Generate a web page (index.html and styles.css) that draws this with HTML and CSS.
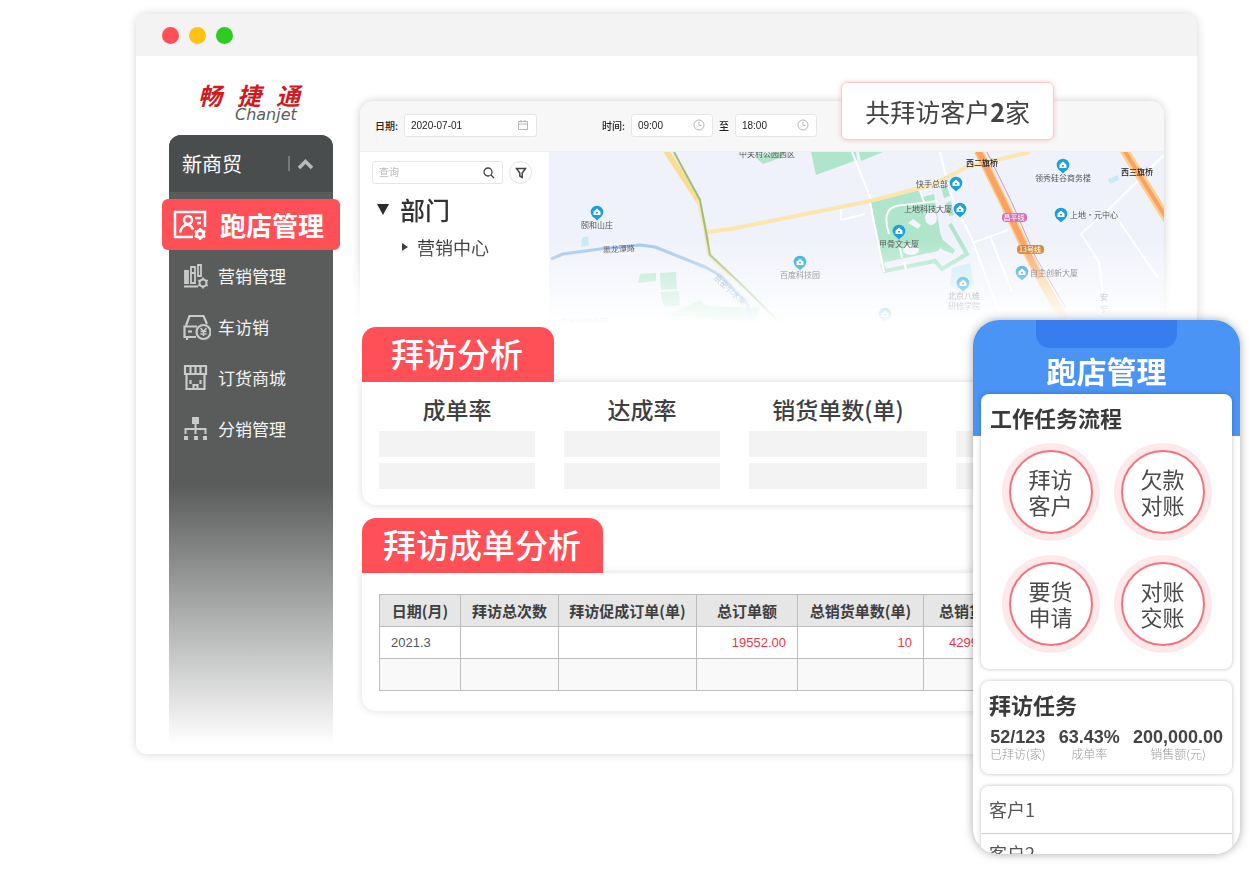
FILE: index.html
```html
<!DOCTYPE html>
<html lang="zh-CN">
<head>
<meta charset="utf-8">
<meta name="viewport" content="width=device-width, initial-scale=1">
<title>跑店管理</title>
<link rel="stylesheet" href="styles.css">
</head>
<body>
<div class="stage">
  <div class="window">
    <header class="titlebar">
      <span class="dot dot-red"></span><span class="dot dot-yellow"></span><span class="dot dot-green"></span>
    </header>
    <div class="window-body">
      <aside class="side">
        <div class="logo">
          <div class="logo-cn"><span>畅</span><span>捷</span><span>通</span></div>
          <div class="logo-en">Chanjet</div>
        </div>
        <nav class="menu">
          <button class="menu-head" type="button">
            <span>新商贸</span>
            <svg class="menu-caret" viewBox="0 0 28 18" width="28" height="18" fill="none"><path d="M2 1v15" stroke="#777a7a" stroke-width="2"/><path d="M12 13l6.500-6.500L25 13" stroke="#b9baba" stroke-width="3.500"/></svg>
          </button>
          <a class="menu-item active" href="#">
            <svg viewBox="0 0 34 30" width="34" height="30" fill="none" stroke="#fff" stroke-width="2.500">
              <path d="M20 27H2V2h30v15"/><circle cx="15" cy="10" r="4"/><path d="M7 22.500c1-5 3-7 7-8 3 .5 5 2.500 6 5"/><path d="M22 8h6M24 13h4"/>
              <circle cx="27" cy="24" r="3.500" stroke-width="3"/><path d="M27 18v2M27 28v2M21.800 21l2 1.200M30.200 25.800l2 1.200M21.800 27l2-1.200M30.200 22.200l2-1.200"/>
            </svg>
            <span>跑店管理</span>
          </a>
          <a class="menu-item" href="#">
            <svg viewBox="0 0 28 28" width="28" height="28" fill="none" stroke="#c9caca" stroke-width="1.800">
              <path d="M2 9h3v12H2zM8 5h4v16H8zM15 3h3v11h-3z"/><path d="M1 24.500h14M3.500 9v12M8 11h4"/>
              <circle cx="20" cy="21" r="3.500" stroke-width="2"/><path d="M20 15.500v2M20 24.500v2M15.200 18.200l1.700 1M23.100 22.800l1.700 1M15.200 23.800l1.700-1M23.100 19.200l1.700-1"/>
            </svg>
            <span>营销管理</span>
          </a>
          <a class="menu-item" href="#">
            <svg viewBox="0 0 28 28" width="28" height="28" fill="none" stroke="#c9caca" stroke-width="2.200">
              <path d="M3 12.500L6.500 3h14L24 11M13 24H1.500V13.500H14M4 24v3M2 13.500h10"/><path d="M5 18.500h4"/>
              <circle cx="20.500" cy="19" r="7"/><path d="M17.500 15l3 3.500 3-3.500M20.500 18.500V23M17.500 18.500h6M17.500 21h6" stroke-width="1.500"/>
            </svg>
            <span>车访销</span>
          </a>
          <a class="menu-item" href="#">
            <svg viewBox="0 0 28 28" width="28" height="28" fill="none" stroke="#c9caca" stroke-width="2.200">
              <path d="M2 2h21v8H2zM7.500 2v8M12.500 2v8M17.500 2v8"/><path d="M3.500 11v14h18V11M2 10h21"/><path d="M7.500 16v4M17.500 16v4M10.500 25v-4h4v4"/>
            </svg>
            <span>订货商城</span>
          </a>
          <a class="menu-item" href="#">
            <svg viewBox="0 0 28 28" width="28" height="28" fill="#c9caca">
              <path d="M9 2h7v7H9zM1 21h4v4H1zM11 21h4v4h-4zM20 21h4v4h-4z"/><path d="M2.500 19v-5h20v5M12.500 9v10" fill="none" stroke="#c9caca" stroke-width="2"/>
            </svg>
            <span>分销管理</span>
          </a>
        </nav>
      </aside>

      <main class="main">
        <div class="fade">
          <section class="map-card">
            <form class="filters">
              <label for="date">日期:</label>
              <span class="field field-date"><input id="date" type="text" value="2020-07-01">
                <svg viewBox="0 0 12 12" width="12" height="12" fill="none" stroke="#b5b5b5"><path d="M1.500 2.500h9v8h-9zM1.500 5h9M4 1v2.500M8 1v2.500"/></svg></span>
              <label class="time-label" for="from">时间:</label>
              <span class="field field-time"><input id="from" type="text" value="09:00">
                <svg viewBox="0 0 12 12" width="12" height="12" fill="none" stroke="#b5b5b5"><circle cx="6" cy="6" r="5"/><path d="M6 3v3.500h2.500"/></svg></span>
              <label for="to">至</label>
              <span class="field field-time"><input id="to" type="text" value="18:00">
                <svg viewBox="0 0 12 12" width="12" height="12" fill="none" stroke="#b5b5b5"><circle cx="6" cy="6" r="5"/><path d="M6 3v3.500h2.500"/></svg></span>
            </form>
            <div class="map-row">
              <div class="tree">
                <div class="search-row">
                  <span class="field field-search"><input type="text" placeholder="查询" aria-label="查询">
                    <svg viewBox="0 0 12 12" width="12" height="12" fill="none" stroke="#444" stroke-width="1.300"><circle cx="5" cy="5" r="4"/><path d="M8 8l3 3"/></svg></span>
                  <button class="round" type="button" aria-label="筛选"><svg viewBox="0 0 12 12" width="12" height="12" fill="none" stroke="#444" stroke-width="1.500"><path d="M1.500 1.500h9L7.200 6v4.500L4.800 9V6z"/></svg></button>
                </div>
                <div class="node node-root"><svg viewBox="0 0 12 11" width="12" height="11"><path d="M0 0h12L6 11z" fill="#2b2b2b"/></svg><span>部门</span></div>
                <div class="node node-child"><svg viewBox="0 0 6 8" width="6" height="8"><path d="M0 0l6 4-6 4z" fill="#2b2b2b"/></svg><span>营销中心</span></div>
              </div>
              <svg class="map" viewBox="549 152 615 175" preserveAspectRatio="xMinYMin slice">
                <defs>
                  <g id="pin"><path d="M0 8.500L-4 4.500h8z" fill="#1a9fdf"/><circle r="6.300" fill="#1a9fdf"/><path d="M-3.500 3v-3.300L0-3.500 3.500-.3V3z" fill="#fff"/><path d="M-1 0h2v1.500h-2z" fill="#1a9fdf"/></g>
                </defs>
                <path d="M549 152h615v178H549z" fill="#eff2fa"/>
                <g fill="#aee5cb">
                  <path d="M811 152h45l1 8-41 15zM859 152h24l-22 9zM755 157l6-3 24-2-2 5-20 7z"/>
                  <path d="M640 274l16-1v8l-18 2zM660 273l16-1 1 17-16 1zM660 292l19-1 1 14-16 2zM668 315l32-15 6 6 54 2-6 14z"/>
                  <path d="M871 202l47-12 5 7 11-3 6 38 4 12-6 7-56 12z"/>
                  <path d="M941 187l6-1 3 10-6 2zM946 203l5-2 3 14-5 1zM943 240l12 10-2 4-12-5z"/>
                  <path d="M882 264l3 7 50-10 7 8 25-15-17-30" fill="none" stroke="#aee5cb" stroke-width="4"/>
                </g>
                <path d="M582 238l6-2 1 10-8 1zM1108 179l10-4 1 5-9 4zM952 268l18-5 4 22-12 8-12-8z" fill="#c9ebf5"/>
                <g fill="none" stroke="#fff" stroke-width="2">
                  <path d="M889 234c-7-22 0-29 16-29l32-4M919 188l5 14M902 258l-2-10M904 262l2 8M870 202l14 70"/>
                  <path d="M852 152l20 50M940 152l9 37 9 22 14 28 19 52 10 24M972 243l36-13M990 236l22 56"/>
                  <path d="M841 209v11l24-6M1164 155l-54 53-29 26 18 28 6 48M1110 208l48 70"/>
                </g>
                <g fill="#f3f5fb"><ellipse cx="931" cy="218" rx="6" ry="7"/><ellipse cx="911" cy="250" rx="8" ry="5"/><path d="M908 223l5-4 8 6-3 4z"/></g>
                <g fill="none" stroke-linejoin="round">
                  <path d="M665 149l34 52" stroke="#fbdc93" stroke-width="6"/>
                  <path d="M698 199l8 33 3 22 22 22" stroke="#fbe6ac" stroke-width="4"/>
                  <path d="M706 232l25-3 139-28 62-16 35-18 63-15" stroke="#fbe6ac" stroke-width="4"/>
                  <path d="M674 152l26 48 6 32 4 23 30 28 38 38" stroke="#9cbf81" stroke-width="2"/>
                  <path d="M551 259l12-5 37-5 40-4 15 2 50 20 16 9 27 29 4 22" stroke="#a5c8ef" stroke-width="3"/>
                  <path d="M978 150l27 55 25 53 15 28 20 34" stroke="#f8d08a" stroke-width="9"/>
                  <path d="M978 150l27 55 25 53 10 20" stroke="#fba263" stroke-width="6"/>
                  <path d="M986 150l26 53 24 55 30 50" stroke="#c99ac4" stroke-width="1"/>
                  <path d="M1124 150l46 74" stroke="#fbd08a" stroke-width="9"/><path d="M1124 150l46 74" stroke="#fba263" stroke-width="4"/>
                </g>
                <rect x="1002" y="213" width="25" height="9" rx="4" fill="#d96fb8"/>
                <rect x="1017" y="245" width="27" height="9" rx="4" fill="#cf7d2c"/>
                <use href="#pin" x="597" y="212"/><use href="#pin" x="800" y="262"/><use href="#pin" x="956" y="183"/>
                <use href="#pin" x="960" y="209"/><use href="#pin" x="899" y="231"/><use href="#pin" x="1063" y="165"/>
                <use href="#pin" x="1061" y="214"/><use href="#pin" x="1022" y="272"/><use href="#pin" x="963" y="283"/><use href="#pin" x="885" y="314"/>
                <g class="map-text">
                  <text x="597" y="228">颐和山庄</text><text x="800" y="278">百度科技园</text><text x="767" y="157">中关村公园西区</text>
                  <text x="932" y="187">快手总部</text><text x="928" y="212">上地科技大厦</text><text x="899" y="247">甲骨文大厦</text>
                  <text x="982" y="166" class="strong">西二旗桥</text><text x="1063" y="181">领秀硅谷商务楼</text><text x="1137" y="175" class="strong">西三旗桥</text>
                  <text x="1094" y="218">上地·元中心</text><text x="1054" y="276">自主创新大厦</text>
                  <text x="964" y="299">北京八维</text><text x="964" y="309">研修学院</text>
                  <text x="619" y="252" transform="rotate(-4 619 252)">黑龙潭路</text>
                  <text x="728" y="292" transform="rotate(42 728 292)" fill="#7d95b8">京密引水渠</text>
                  <text x="1014" y="220" class="line-tag">昌平线</text><text x="1030" y="252" class="line-tag">13号线</text>
                  <text x="1104" y="300">安</text><text x="1104" y="312">宁</text>
                  <text x="584" y="325">中关村软件园</text>
                </g>
              </svg>
            </div>
          </section>
        </div>
        <div class="callout">共拜访客户<b>2</b>家</div>

        <section class="panel">
          <h2 class="tab tab-short">拜访分析</h2>
          <div class="panel-card metrics">
            <div class="metric"><h3>成单率</h3><i></i><i></i></div>
            <div class="metric"><h3>达成率</h3><i></i><i></i></div>
            <div class="metric"><h3>销货单数(单)</h3><i></i><i></i></div>
            <div class="metric"><h3></h3><i></i><i></i></div>
          </div>
        </section>

        <section class="panel">
          <h2 class="tab tab-long">拜访成单分析</h2>
          <div class="panel-card table-card">
            <table>
              <colgroup><col class="c1"><col class="c2"><col class="c3"><col class="c4"><col class="c5"><col class="c6"></colgroup>
              <thead><tr><th>日期(月)</th><th>拜访总次数</th><th>拜访促成订单(单)</th><th>总订单额</th><th>总销货单数(单)</th><th>总销货额</th></tr></thead>
              <tbody>
                <tr><td class="date">2021.3</td><td></td><td></td><td>19552.00</td><td>10</td><td>42990.00</td></tr>
                <tr><td></td><td></td><td></td><td></td><td></td><td></td></tr>
              </tbody>
            </table>
          </div>
        </section>
      </main>
    </div>
  </div>

  <section class="phone">
    <div class="notch"></div>
    <h2 class="phone-title">跑店管理</h2>
    <div class="card flow">
      <h3>工作任务流程</h3>
      <div class="circles">
        <button type="button">拜访<br>客户</button><button type="button">欠款<br>对账</button>
        <button type="button">要货<br>申请</button><button type="button">对账<br>交账</button>
      </div>
    </div>
    <div class="card tasks">
      <h3>拜访任务</h3>
      <dl class="figures">
        <div><dd>52/123</dd><dt>已拜访(家)</dt></div>
        <div><dd>63.43%</dd><dt>成单率</dt></div>
        <div><dd>200,000.00</dd><dt>销售额(元)</dt></div>
      </dl>
    </div>
    <ul class="card clients"><li>客户1</li><li>客户2</li></ul>
  </section>
</div>
</body>
</html>
```
FILE: styles.css
```css
* { box-sizing: border-box; margin: 0; padding: 0; }
body { background: #fff; color: #444; font-family: "Noto Sans CJK SC", sans-serif; }
button, input { font: inherit; color: inherit; border: 0; background: none; }
svg { flex: none; display: block; }

.stage { position: relative; min-height: 100vh; padding: 14px 59px 115px 136px; overflow: hidden; }
.window { border-radius: 12px 12px 10px 10px; background: #fff; box-shadow: 0 0 10px rgba(0, 0, 0, .17); }
.titlebar { display: flex; align-items: center; gap: 10px; height: 42px; padding-left: 26px; background: #f3f3f3; border-radius: 12px 12px 0 0; }
.dot { width: 17px; height: 17px; border-radius: 50%; }
.dot-red { background: #ff4f57; }
.dot-yellow { background: #ffc20e; }
.dot-green { background: #2fca22; }
.window-body { display: flex; gap: 20px; padding: 0 33px 0 26px; }

.side { flex: 0 0 178px; padding: 24px 7px 4px; }
.logo { height: 55px; padding-left: 29px; font-style: italic; }
.logo-cn { display: flex; gap: 15px; font-size: 24px; line-height: 30px; font-weight: 700; color: #cf1a1f; }
.logo-en { padding-left: 37px; font-family: "DejaVu Sans", sans-serif; font-size: 16px; line-height: 10px; color: #5c5c5c; }
.menu { height: 612px; border-radius: 12px 12px 0 0; background: linear-gradient(#5a5c5c 350px, #fff 610px); }
.menu-head { display: flex; align-items: center; justify-content: space-between; width: 100%; height: 57px; margin-bottom: 7px; padding: 0 18px 0 13px; border-radius: 12px 12px 0 0; background: #4a4d4d; color: #fff; font-size: 20px; }
.menu-item { display: flex; align-items: center; gap: 7px; height: 51px; padding-left: 14px; color: #f4f4f4; font-size: 17px; text-decoration: none; }
.menu-item.active { gap: 13px; margin: 0 -7px; padding-left: 11px; border-radius: 6px; background: #ff4f57; color: #fff; font-size: 26px; font-weight: 700; }

.main { position: relative; flex: 1; min-width: 0; padding: 33px 0 43px; }
.fade { margin: -12px -12px 0; padding: 24px 12px 0; -webkit-mask-image: linear-gradient(#000 65%, transparent 99%); mask-image: linear-gradient(#000 65%, transparent 99%); }
.map-card { border-radius: 14px; background: #fff; box-shadow: 0 0 9px rgba(0, 0, 0, .2); overflow: hidden; }
.filters { display: flex; align-items: center; gap: 6px; height: 51px; padding: 0 15px 2px; background: #f7f7f7; font-size: 10px; font-weight: 500; color: #222; border-bottom: 1px solid #f0f0f0; }
.field { display: flex; align-items: center; height: 23px; padding: 0 7px 0 6px; border: 1px solid #e6e6e6; border-radius: 3px; background: #fff; }
.field input { flex: 1; min-width: 0; width: 100%; font-family: "Liberation Sans", "Noto Sans CJK SC", sans-serif; font-size: 10px; outline: 0; }
.field input::placeholder { color: #bbb; }
.field-date { width: 133px; }
.field-time { width: 82px; }
.time-label { margin-left: 59px; }
.map-row { display: flex; height: 175px; }
.tree { flex: 0 0 189px; padding: 9px 12px; color: #333; }
.search-row { display: flex; align-items: center; gap: 6px; }
.field-search { width: 131px; }
.round { display: grid; place-items: center; width: 23px; height: 23px; border: 1px solid #e2e2e2; border-radius: 50%; }
.node { display: flex; align-items: center; }
.node-root { gap: 11px; height: 50px; padding-left: 5px; font-size: 25px; font-weight: 500; }
.node-child { gap: 9px; height: 26px; padding-left: 30px; font-size: 18px; }
.map { flex: 1; min-width: 0; height: 175px; }
.map-text { font-size: 8px; fill: #555; text-anchor: middle; }
.map-text .strong { fill: #222; font-weight: 500; }
.map-text .line-tag { fill: #fff; font-size: 7px; }

.callout { position: absolute; top: 26px; right: 110px; padding: 0 23px; border: 1px solid #ffc9cb; border-radius: 6px; background: #fff; box-shadow: 0 0 5px rgba(255, 79, 87, .3); font-size: 25px; line-height: 56px; color: #444; }

.panel { margin: 0 0 13px 2px; }
.panel:last-child { margin-bottom: 0; }
.tab { position: relative; z-index: 1; display: inline-block; height: 55px; border-radius: 14px 14px 0 0; background: #ff4f57; color: #fff; font-size: 33px; line-height: 53px; font-weight: 500; vertical-align: top; }
.tab-short { padding: 0 31px 0 29px; }
.tab-long { padding: 0 22px 0 21px; }
.panel-card { border-radius: 0 0 14px 14px; background: #fff; box-shadow: 0 0 8px rgba(0, 0, 0, .14); overflow: hidden; }
.metrics { display: grid; grid-template-columns: 156px 156px 178px 1fr; gap: 29px; padding: 12px 17px 16px; }
.metric { display: grid; gap: 6px; }
.metric h3 { height: 31px; font-size: 23px; line-height: 31px; font-weight: 500; text-align: center; color: #3f3f3f; }
.metric i { height: 26px; background: #f3f3f3; }
.table-card { padding: 21px 17px 20px; }
table { width: 100%; table-layout: fixed; border-collapse: collapse; }
.c1 { width: 81px; } .c2 { width: 98px; } .c3 { width: 138px; } .c4 { width: 101px; } .c5 { width: 126px; }
th, td { height: 32px; border: 1px solid #bdbdbd; }
th { background: #e6e6e6; color: #3f3f3f; font-size: 15px; line-height: 20px; font-weight: 700; white-space: nowrap; }
th:last-child { padding-left: 15px; text-align: left; }
td { padding: 0 11px; font-family: "Liberation Sans", sans-serif; font-size: 13px; line-height: 16px; color: #e8384a; text-align: right; }
td:last-child { padding-left: 25px; text-align: left; }
td.date { color: #555; text-align: left; }
tbody tr:last-child td { background: #f9f9f9; }

.phone { position: absolute; top: 320px; right: 16px; bottom: 15px; width: 267px; padding: 0 8px; border-radius: 26px; overflow: hidden; background: linear-gradient(#4a94f5 116px, #fff 116px); box-shadow: 0 0 10px rgba(0, 0, 0, .35); }
.notch { width: 141px; height: 28px; margin: 0 auto; border-radius: 0 0 14px 14px; background: #387df0; }
.phone-title { height: 46px; color: #fff; font-size: 30px; line-height: 44px; font-weight: 700; text-align: center; }
.card { margin-bottom: 12px; border-radius: 8px; background: #fff; box-shadow: 0 0 4px rgba(0, 0, 0, .25); }
.card h3 { color: #3a3a3a; font-size: 22px; line-height: 30px; font-weight: 700; }
.flow { padding: 8px 9px 23px; }
.circles { display: grid; grid-template-columns: 84px 84px; gap: 28px; justify-content: center; padding-top: 18px; }
.circles button { width: 84px; height: 84px; padding-bottom: 2px; border: 2px solid #f4707b; border-radius: 50%; box-shadow: 0 0 0 7px #ffe8e9; font-size: 22px; line-height: 26px; font-weight: 400; color: #4a4a4a; }
.tasks { height: 93px; padding: 8px; }
.figures { display: flex; justify-content: space-between; padding: 9px 1px 0; text-align: center; }
.figures div { display: flex; flex-direction: column; }
.figures dd { font-family: "Liberation Sans", sans-serif; font-size: 18px; line-height: 19px; font-weight: 700; }
.figures dt { font-size: 12px; line-height: 14px; font-weight: 300; color: #999; }
.clients { list-style: none; }
.clients li { height: 47px; padding-left: 8px; font-size: 18px; line-height: 47px; font-weight: 400; color: #555; }
.clients li + li { border-top: 1px solid #ccc; line-height: 38px; }
```
